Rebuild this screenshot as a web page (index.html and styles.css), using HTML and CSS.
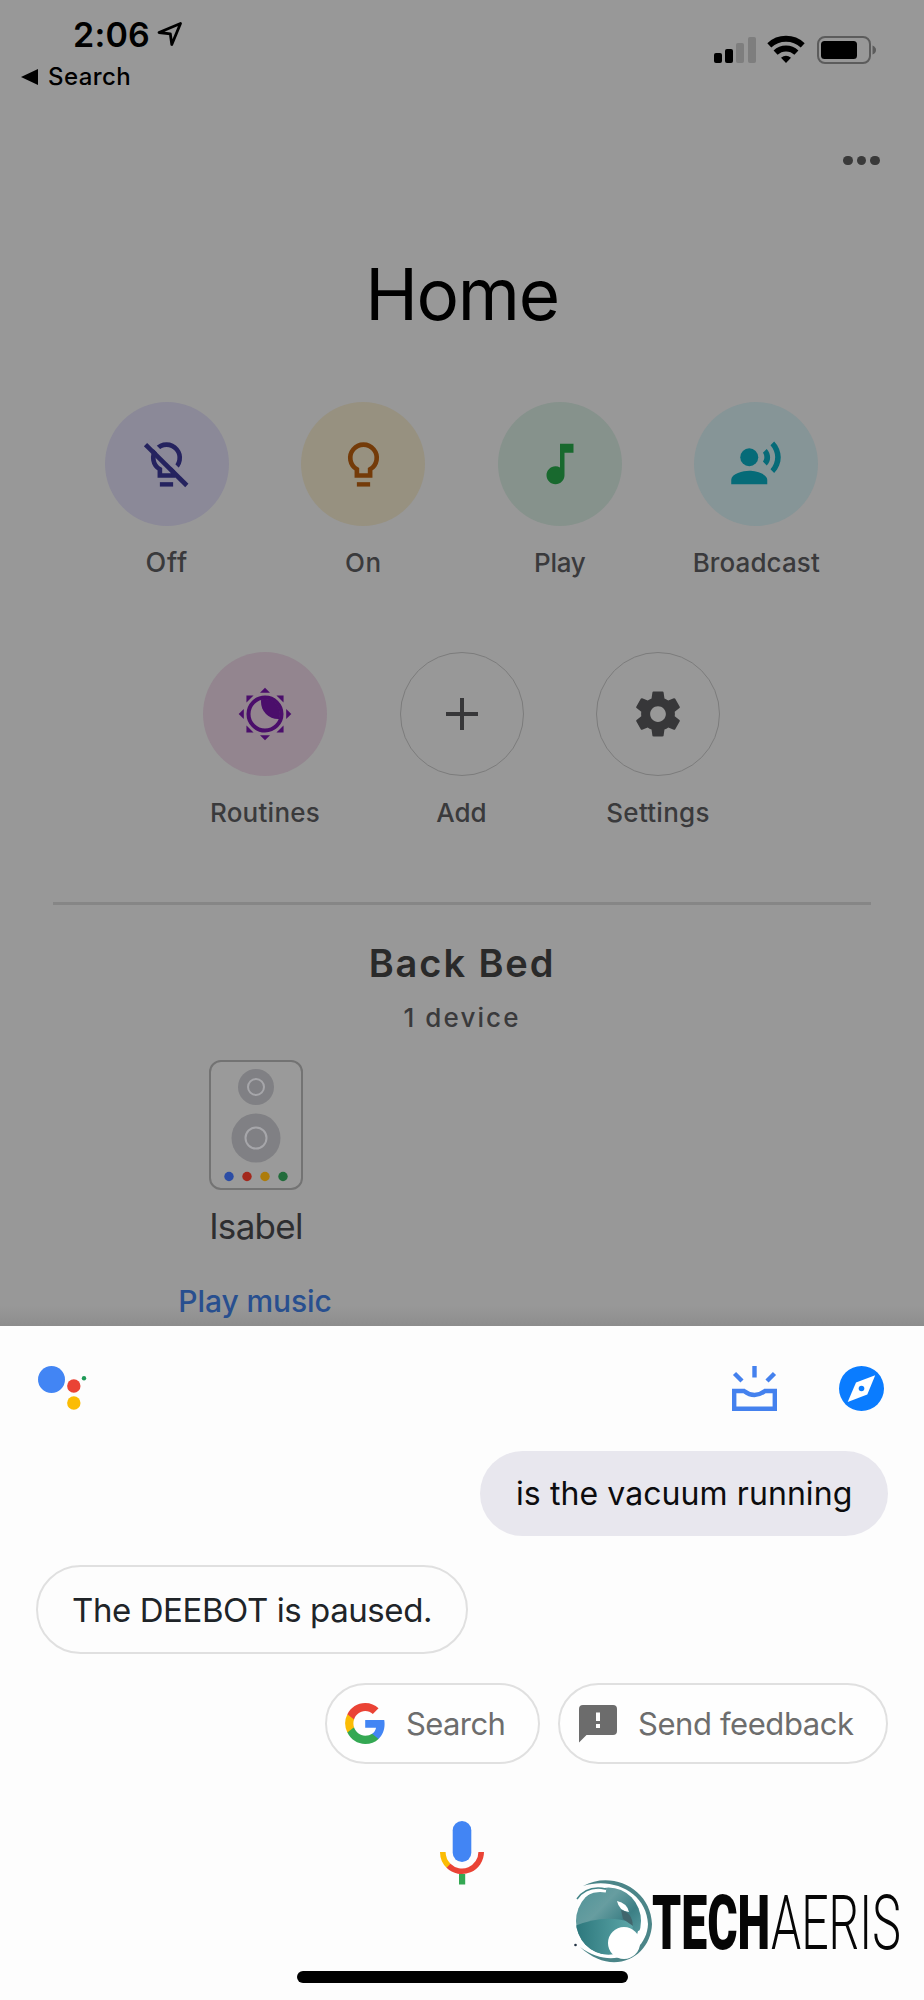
FILE: index.html
```html
<!DOCTYPE html>
<html lang="en">
<head>
<meta charset="utf-8">
<title>Home</title>
<link rel="stylesheet" href="styles.css">
</head>
<body>
<div class="screen">
  <main class="home">
    <header class="status">
      <div class="status-left">
        <div class="clock"><span class="time">2:06</span>
          <svg class="loc" width="26" height="26" viewBox="0 0 26 26"><path d="M2 11.5 23.5 2.5 14.8 23.5 13.3 12.8Z" fill="none" stroke="#000" stroke-width="2.8" stroke-linejoin="round"/></svg>
        </div>
        <div class="back"><svg width="18" height="18" viewBox="0 0 18 18"><path d="M0 9 17 1V17Z"/></svg><span class="back-text">Search</span></div>
      </div>
      <svg class="indicators" width="164" height="30" viewBox="0 0 164 30">
        <rect x="0" y="18" width="8" height="10" rx="2"/><rect x="11" y="14" width="8" height="14" rx="2"/>
        <rect x="22" y="8" width="8" height="20" rx="2" fill="#7e7e7e"/><rect x="34" y="2" width="8" height="26" rx="2" fill="#7e7e7e"/>
        <g fill="none" stroke="#000" stroke-width="5.8"><path d="M55.3 10.3A24.5 24.5 0 0 1 88.7 10.3"/><path d="M61.6 17.700A15 15 0 0 1 82.4 17.700"/></g>
        <path d="M67 22.8Q72 18.9 77 22.8L72 28Z"/>
        <rect x="104" y="2" width="52" height="26" rx="7" fill="none" stroke="#5c5c5c" stroke-width="2"/>
        <rect x="107" y="6" width="36" height="18" rx="3.5"/>
        <path d="M158.500 10.500Q162 12 162 15T158.500 19.500Z" fill="#5c5c5c"/>
      </svg>
    </header>
    <div class="more"><i></i><i></i><i></i></div>
    <h1 class="title">Home</h1>
    <section class="actions">
      <div class="action"><span class="disc violet"><svg width="53" height="53" viewBox="0 0 24 24"><path d="M9 17V14.200A6 6 0 1 1 15 14.200V17Z" fill="none" stroke="#25235f" stroke-width="2.100"/><path d="M9 20H15V22H9Z" fill="#25235f"/><path d="M3.800 1.200 22.800 20.200" stroke="#8b8998" stroke-width="2.200"/><path d="M2.500 3 21.200 21.500" stroke="#25235f" stroke-width="2.100"/></svg></span><span class="label l-off">Off</span></div>
      <div class="action"><span class="disc sand"><svg width="53" height="53" viewBox="0 0 24 24"><path d="M9 17V14.200A6 6 0 1 1 15 14.200V17Z" fill="none" stroke="#743b09" stroke-width="2.100"/><path d="M9 20H15V22H9Z" fill="#743b09"/></svg></span><span class="label l-on">On</span></div>
      <div class="action"><span class="disc mint"><svg width="54" height="54" viewBox="0 0 24 24"><path fill="#18692e" d="M12 3v10.550c-.59-.34-1.270-.55-2-.55-2.210 0-4 1.790-4 4s1.790 4 4 4 4-1.790 4-4V7h4V3h-6z"/></svg></span><span class="label l-play">Play</span></div>
      <div class="action"><span class="disc aqua"><svg width="54" height="54" viewBox="0 0 24 24"><g fill="#066b78"><circle cx="9" cy="9" r="4"/><path d="M9 15c-2.670 0-8 1.340-8 4v2h16v-2c0-2.660-5.330-4-8-4zm7.760-9.640l-1.680 1.690c.84 1.180.84 2.710 0 3.890l1.680 1.690c2.020-2.020 2.020-5.070 0-7.270zM20.070 2l-1.630 1.630c2.770 3.020 2.770 7.560 0 10.740L20.070 16c3.900-3.890 3.910-9.950 0-14z"/></g></svg></span><span class="label l-broadcast">Broadcast</span></div>
    </section>
    <section class="actions second">
      <div class="action"><span class="disc pink"><svg width="54" height="54" viewBox="-27 -27 54 54">
        <defs><clipPath id="sun"><circle r="15"/></clipPath></defs>
        <g fill="#4b0e6b"><g clip-path="url(#sun)"><circle cx="13" cy="-12" r="17"/></g>
        <path id="ray" d="M0-26.300 5-21.200H-5Z"/><use href="#ray" transform="rotate(45)"/><use href="#ray" transform="rotate(90)"/><use href="#ray" transform="rotate(135)"/><use href="#ray" transform="rotate(180)"/><use href="#ray" transform="rotate(225)"/><use href="#ray" transform="rotate(270)"/><use href="#ray" transform="rotate(315)"/></g>
        <circle r="16.500" fill="none" stroke="#4b0e6b" stroke-width="4"/></svg></span><span class="label l-routines">Routines</span></div>
      <div class="action"><span class="disc outline"><svg width="32" height="32" viewBox="0 0 32 32"><path d="M16 0V32M0 16H32" stroke="#373739" stroke-width="4"/></svg></span><span class="label l-add">Add</span></div>
      <div class="action"><span class="disc outline"><svg width="54" height="54" viewBox="0 0 24 24"><path fill="#373739" d="M19.430 12.980c.04-.32.07-.64.07-.98s-.03-.66-.07-.98l2.110-1.650c.19-.15.24-.42.12-.64l-2-3.460c-.12-.22-.39-.3-.61-.22l-2.490 1c-.52-.4-1.080-.73-1.690-.98l-.38-2.650C14.460 2.180 14.250 2 14 2h-4c-.25 0-.46.18-.49.42l-.38 2.650c-.61.25-1.170.59-1.690.98l-2.490-1c-.23-.09-.49 0-.61.22l-2 3.460c-.13.22-.07.49.12.64l2.110 1.650c-.04.32-.07.65-.07.98s.03.66.07.98l-2.110 1.650c-.19.15-.24.42-.12.64l2 3.460c.12.22.39.3.61.22l2.490-1c.52.4 1.080.73 1.690.98l.38 2.650c.03.24.24.42.49.42h4c.25 0 .46-.18.49-.42l.38-2.650c.61-.25 1.170-.59 1.690-.98l2.490 1c.23.09.49 0 .61-.22l2-3.460c.12-.22.07-.49-.12-.64l-2.110-1.650zM12 15.500c-1.930 0-3.500-1.570-3.500-3.500s1.570-3.500 3.500-3.500 3.500 1.570 3.500 3.500-1.570 3.500-3.500 3.500z"/></svg></span><span class="label l-settings">Settings</span></div>
    </section>
    <hr class="divider">
    <h2 class="room">Back Bed</h2>
    <p class="count">1 device</p>
    <article class="device">
      <svg width="94" height="130" viewBox="0 0 94 130">
        <rect x="1" y="1" width="92" height="128" rx="11" fill="#9a9a9a" stroke="#737373" stroke-width="2"/>
        <g fill="#808084"><circle cx="47" cy="27" r="18"/><circle cx="47" cy="78" r="24.500"/></g>
        <g fill="none" stroke="#a6a6aa" stroke-width="2"><circle cx="47" cy="27" r="8"/><circle cx="47" cy="78" r="10.500"/></g>
        <circle cx="20" cy="116.500" r="4.700" fill="#2c4da5"/><circle cx="38" cy="116.500" r="4.700" fill="#a3281c"/><circle cx="56" cy="116.500" r="4.700" fill="#ad7c0b"/><circle cx="74" cy="116.500" r="4.700" fill="#226c3b"/>
      </svg>
      <span class="name">Isabel</span>
      <span class="play">Play music</span>
    </article>
  </main>

  <section class="sheet">
    <header class="sheet-bar">
      <svg class="assistant" width="50" height="46" viewBox="0 0 50 46"><circle cx="13.500" cy="13.500" r="13.500" fill="#4285f4"/><circle cx="35.800" cy="20" r="6.700" fill="#ea4335"/><circle cx="35.800" cy="37" r="6.700" fill="#fbbc04"/><circle cx="46" cy="12.300" r="2.200" fill="#1e9a57"/></svg>
      <svg class="inbox" width="45" height="45" viewBox="0 0 45 45" fill="none" stroke="#4481ee" stroke-width="4.400"><path d="M2.200 25H12Q22.500 33 33 25H42.800V42.800H2.200Z"/><path d="M22.500 0V11.500M2.500 7.500 10 15M42.500 7.500 35 15"/></svg>
      <svg class="compass" width="45" height="45" viewBox="0 0 45 45"><circle cx="22.500" cy="22.500" r="22.500" fill="#0a7cff"/><path d="M36.200 9.300 28.300 28.500 8.700 36 17 16.500Z" fill="#fff"/><circle cx="22.500" cy="22.500" r="2.800" fill="#0a7cff"/></svg>
    </header>
    <div class="bubble query"><span class="query-text">is the vacuum running</span></div>
    <div class="bubble reply"><span class="reply-text">The DEEBOT is paused.</span></div>
    <div class="chips">
      <div class="chip chip-search"><svg width="40" height="41" viewBox="0 0 48 48" preserveAspectRatio="none"><path fill="#4285f4" d="M47.500 24.550c0-1.630-.15-3.200-.42-4.710H24.240v9.020h13.040c-.58 2.970-2.260 5.480-4.780 7.180v5.980h7.730c4.520-4.160 7.270-10.290 7.270-17.470z"/><path fill="#34a853" d="M24.240 48c6.460 0 11.870-2.130 15.990-5.980l-7.730-5.980c-2.150 1.440-4.890 2.290-8.260 2.290-6.240 0-11.530-4.210-13.410-9.880H2.840v6.170C6.940 42.770 14.940 48 24.240 48z"/><path fill="#fbbc05" d="M10.830 28.450a14.400 14.400 0 0 1 0-9.200v-6.170H2.840a23.800 23.800 0 0 0 0 21.540z"/><path fill="#ea4335" d="M24.240 9.370c3.510 0 6.660 1.210 9.140 3.580l6.860-6.860C36.100 2.330 30.700 0 24.240 0 14.940 0 6.940 5.230 2.840 13.080l7.990 6.170c1.880-5.670 7.170-9.880 13.410-9.880z"/></svg><span class="chip-text t-search">Search</span></div>
      <div class="chip chip-feedback"><svg width="38" height="38" viewBox="0 0 38 38"><path fill="#6c6c6c" d="M4 0H34Q38 0 38 4V26Q38 30 34 30H7.500L0 37.500V4Q0 0 4 0Z"/><path fill="#fdfdfd" d="M17 7.500H21V16H17ZM17 19H21V23H17Z"/></svg><span class="chip-text t-feedback">Send feedback</span></div>
    </div>
    <svg class="mic" width="44" height="64" viewBox="0 0 44 64"><rect x="12.700" y="0" width="18.600" height="41" rx="9.300" fill="#4285f4"/><g fill="none" stroke-width="5.600"><path d="M2.800 31A19.200 19.200 0 0 0 9 45.200" stroke="#fbbc04"/><path d="M8.500 44.700A19.200 19.200 0 0 0 41.200 31" stroke="#ea4335"/></g><rect x="19" y="53" width="6.200" height="10.500" fill="#34a853"/></svg>
    <div class="indicator"></div>
  </section>

  <div class="watermark">
    <svg width="82" height="96" viewBox="570 1874 82 96">
      <defs>
        <linearGradient id="ball" x1="0" y1="0" x2="1" y2="1"><stop offset="0" stop-color="#4d9297"/><stop offset=".35" stop-color="#679da0"/><stop offset=".6" stop-color="#3c7f85"/><stop offset="1" stop-color="#69b0b2"/></linearGradient>
        <linearGradient id="low" x1="0" y1="0" x2="1" y2="0"><stop offset="0" stop-color="#2c777c"/><stop offset="1" stop-color="#5da6a8"/></linearGradient>
        <clipPath id="eye"><ellipse cx="608.500" cy="1921" rx="32.500" ry="33.500"/></clipPath>
      </defs>
      <ellipse cx="613" cy="1922" rx="38" ry="41" fill="#fff"/>
      <path d="M583 1886C612 1870 651 1889 652 1924C651 1957 613 1978 580 1947C612 1971 647 1953 648 1924C647 1893 613 1876 583 1886Z" fill="#4b8588"/>
      <g clip-path="url(#eye)"><rect x="575" y="1886" width="68" height="70" fill="url(#ball)"/><path d="M575 1926Q605 1913 633 1923L630 1956H575Z" fill="url(#low)"/><path d="M617 1901Q627 1903 629 1912Q619 1911 617 1901Z" fill="#fff"/><path d="M621 1910Q632 1912 633 1926L623 1919Z" fill="#40666d"/></g>
      <path d="M578 1903Q587 1888 606 1891" fill="none" stroke="#fff" stroke-width="3"/>
      <path d="M577 1899Q587 1885 606 1889" fill="none" stroke="#438487" stroke-width="1.500"/>
      <circle cx="624" cy="1943" r="16" fill="#fff"/><path d="M614 1955Q634 1957 641 1930L638 1931Q634 1951 614 1955Z" fill="#fff"/>
      <circle cx="575.500" cy="1945" r="1.300" fill="#234"/>
    </svg>
    <span class="mark mark-bold"><span class="squeeze">TECH</span></span>
    <span class="mark mark-thin"><span class="squeeze">AERIS</span></span>
  </div>
</div>
</body>
</html>
```

FILE: styles.css
```css
* { box-sizing: border-box; }
body { margin: 0; background: #fdfdfd; font-family: Inter, "Liberation Sans", sans-serif; }
h1, h2, p { margin: 0; font-weight: 400; }
svg { display: block; flex: none; }
.screen { position: relative; width: 924px; height: 2000px; overflow: hidden; }

.home { height: 1326px; background: linear-gradient(#989898 0, #989898 1306px, #8d8d8d 1326px); color: #000; overflow: hidden; }
.status { height: 92px; padding: 15px 48px 0 21px; display: flex; justify-content: space-between; }
.clock { display: flex; padding-left: 52px; height: 40px; margin-bottom: 7px; }
.time { font-size: 34px; line-height: 40px; font-weight: 600; width: 84px; white-space: nowrap; letter-spacing: 0.2px; }
.loc { margin-top: 6px; }
.back { display: flex; align-items: center; gap: 9px; height: 30px; }
.back-text { font-size: 24px; line-height: 30px; font-weight: 500; white-space: nowrap; letter-spacing: 0.4px; }
.indicators { margin: 20px -2px 0 0; }
.more { display: flex; justify-content: flex-end; gap: 4px; padding: 63.500px 44.500px 0 0; height: 160px; }
.more i { width: 9.500px; height: 9.500px; border-radius: 50%; background: #3a3a3a; }
.title { font-size: 71px; line-height: 84px; text-align: center; letter-spacing: -1.3px; }
.actions { display: flex; justify-content: center; padding: 66px 1px 0 0; }
.second { padding-top: 73px; }
.action { width: 196.500px; display: flex; flex-direction: column; align-items: center; gap: 21px; }
.disc { width: 124px; height: 124px; border-radius: 50%; display: flex; align-items: center; justify-content: center; }
.violet { background: #8b8998; }
.sand { background: #979180; }
.mint { background: #86928c; }
.aqua { background: #869597; }
.pink { background: #93858f; }
.outline { border: 1.500px solid #7c7c7c; }
.label { font-size: 26px; line-height: 32px; height: 32px; font-weight: 500; color: #3a3a3c; white-space: nowrap; }
.l-off { font-size: 27px; letter-spacing: 0.8px; }
.l-on { letter-spacing: 0.5px; }
.l-play { letter-spacing: -0.3px; }
.l-broadcast { letter-spacing: 0.1px; }
.l-routines, .l-settings { letter-spacing: 0.25px; }
.divider { margin: 73px 53px 0; height: 3px; border: 0; background: #868686; }
.room { margin-top: 35px; font-size: 38px; line-height: 46px; font-weight: 600; text-align: center; color: #2a2a2a; letter-spacing: 1.9px; }
.count { margin-top: 16px; font-size: 26px; line-height: 32px; font-weight: 500; text-align: center; color: #3a3a3c; letter-spacing: 2.1px; }
.device { width: 240px; margin: 26px 0 0 136px; display: flex; flex-direction: column; align-items: center; }
.name { margin-top: 14px; font-size: 35px; line-height: 44px; color: #2e2e30; letter-spacing: -0.7px; }
.play { margin-top: 34px; font-size: 30px; line-height: 38px; font-weight: 500; color: #284f8f; white-space: nowrap; letter-spacing: -0.1px; margin-right: 2px; }

.sheet { height: 674px; background: #fdfdfd; display: flex; flex-direction: column; padding: 40px 36px 0; }
.sheet-bar { display: flex; height: 46px; padding: 0 4px 0 2px; }
.compass { margin-left: 62px; }
.inbox { margin-left: auto; }
.bubble { display: flex; align-items: center; white-space: nowrap; }
.query { align-self: flex-end; width: 408px; height: 85px; margin-top: 39px; padding-left: 36px; border-radius: 43px; background: #e8e7ee; color: #0c0c0e; font-size: 32px; letter-spacing: 0.08px; }
.reply { width: 432px; height: 89px; margin-top: 29px; padding-left: 34px; border: 2px solid #e0e0e0; border-radius: 45px; color: #202428; font-size: 33px; letter-spacing: -0.42px; }
.chips { display: flex; justify-content: flex-end; gap: 18px; margin-top: 29px; }
.chip { display: flex; align-items: center; height: 81px; border: 2px solid #e0e0e0; border-radius: 41px; background: #fefefe; }
.chip-search { width: 215px; padding-left: 18px; gap: 21px; }
.chip-feedback { width: 330px; padding-left: 19px; gap: 21px; }
.chip-text { font-size: 31px; color: #6d6d6d; white-space: nowrap; letter-spacing: -0.42px; }
.t-search { letter-spacing: -0.6px; }
.mic { align-self: center; margin-top: 57px; }
.indicator { align-self: center; width: 331px; height: 12px; margin-top: 86px; border-radius: 6px; background: #000; }

.watermark { position: absolute; left: 570px; top: 1874px; display: flex; height: 96px; color: #060606; font-family: Roboto, "Liberation Sans", sans-serif; }
.mark { padding-top: 5px; font-size: 76px; line-height: 88px; white-space: nowrap; }
.mark-bold { width: 119px; font-weight: 900; }
.mark-thin { width: 130px; font-weight: 300; }
.squeeze { display: inline-block; transform-origin: 0 50%; }
.mark-bold .squeeze { transform: scaleX(0.61); }
.mark-thin .squeeze { transform: scaleX(0.635); }
```
